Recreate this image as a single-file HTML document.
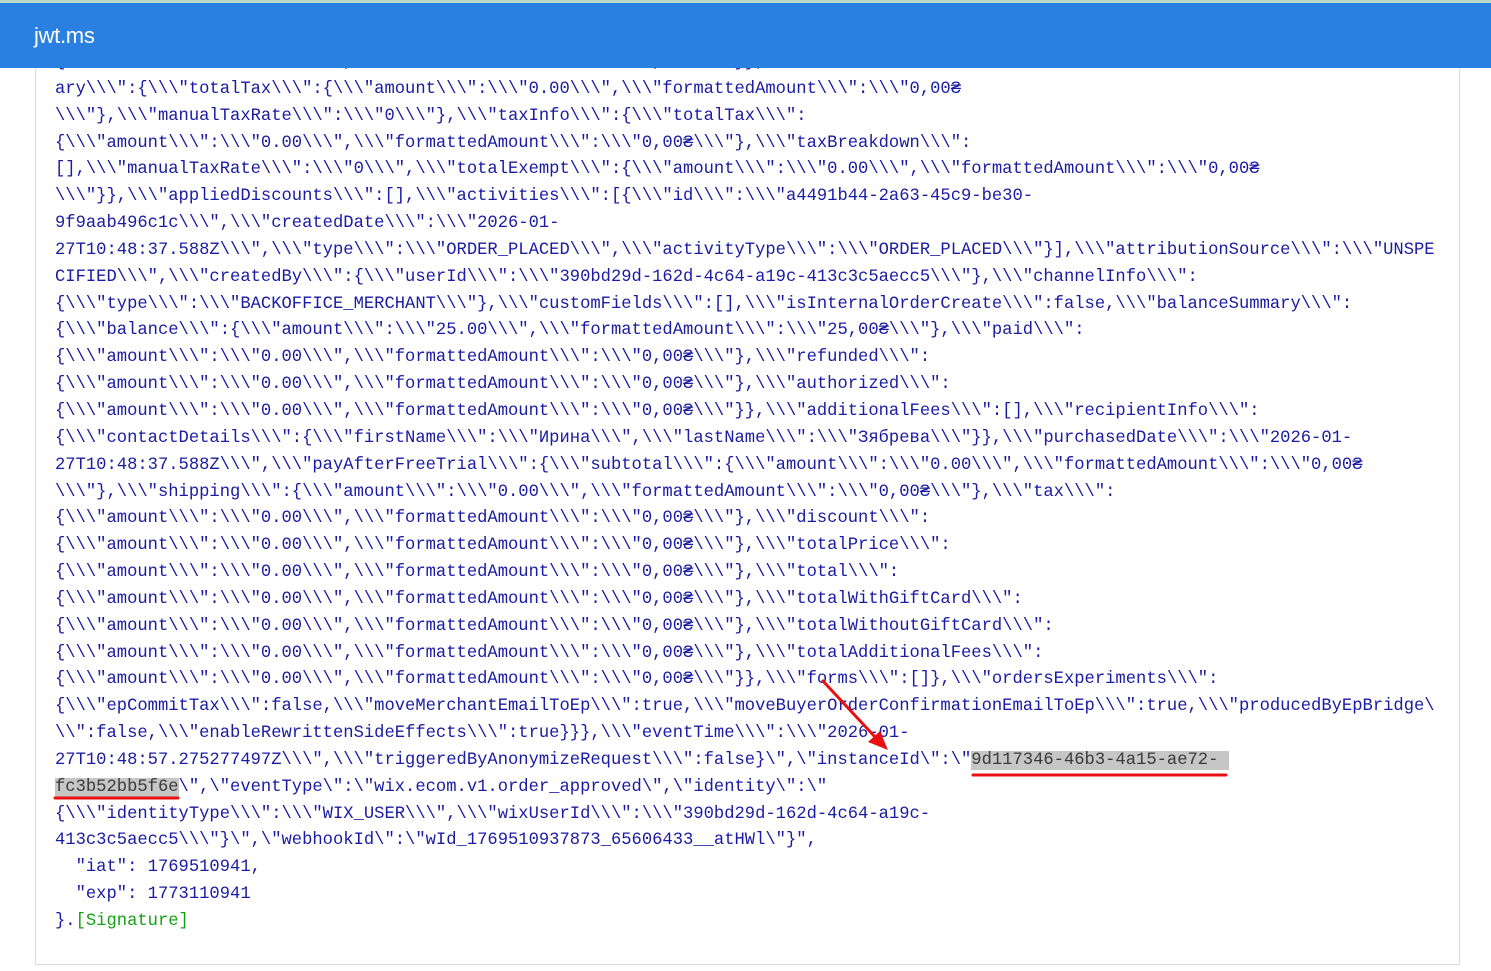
<!DOCTYPE html>
<html><head><meta charset="utf-8"><style>
html,body{margin:0;padding:0;width:1491px;height:971px;overflow:hidden;background:#fff;}
.top{position:absolute;left:0;top:0;width:1491px;height:3px;background:#b9d9c9;}
.hdr{position:absolute;left:0;top:3px;width:1491px;height:65px;background:#2a80e1;z-index:5;}
.hdr span{position:absolute;left:34px;top:20px;color:#fff;font:22px "Liberation Sans",sans-serif;letter-spacing:-0.3px;}
.card{position:absolute;left:35px;top:40px;width:1423px;height:924px;border:1px solid #dcdcdc;border-top:none;}
.code{position:absolute;left:55px;top:50px;font-family:"Liberation Mono","DejaVu Sans Mono",monospace;font-size:17.17px;color:#1b1ba3;}
.code div{height:26.85px;line-height:26.85px;white-space:pre;}
.hl{background:#c6c6c6;color:#3a3a3a;}
.g{color:#16a016;}
</style></head><body>
<div class="top"></div>
<div class="hdr"><span>jwt.ms</span></div>
<div class="card"></div>
<div class="code"><div>{\\\"amount\\\":\\\"0.00\\\",\\\"formattedAmount\\\":\\\"0,00₴\\\"}},\\\"taxSumm</div><div>ary\\\":{\\\"totalTax\\\":{\\\"amount\\\":\\\"0.00\\\",\\\"formattedAmount\\\":\\\"0,00₴</div><div>\\\"},\\\"manualTaxRate\\\":\\\"0\\\"},\\\"taxInfo\\\":{\\\"totalTax\\\":</div><div>{\\\"amount\\\":\\\"0.00\\\",\\\"formattedAmount\\\":\\\"0,00₴\\\"},\\\"taxBreakdown\\\":</div><div>[],\\\"manualTaxRate\\\":\\\"0\\\",\\\"totalExempt\\\":{\\\"amount\\\":\\\"0.00\\\",\\\"formattedAmount\\\":\\\"0,00₴</div><div>\\\"}},\\\"appliedDiscounts\\\":[],\\\"activities\\\":[{\\\"id\\\":\\\"a4491b44-2a63-45c9-be30-</div><div>9f9aab496c1c\\\",\\\"createdDate\\\":\\\"2026-01-</div><div>27T10:48:37.588Z\\\",\\\"type\\\":\\\"ORDER_PLACED\\\",\\\"activityType\\\":\\\"ORDER_PLACED\\\"}],\\\"attributionSource\\\":\\\"UNSPE</div><div>CIFIED\\\",\\\"createdBy\\\":{\\\"userId\\\":\\\"390bd29d-162d-4c64-a19c-413c3c5aecc5\\\"},\\\"channelInfo\\\":</div><div>{\\\"type\\\":\\\"BACKOFFICE_MERCHANT\\\"},\\\"customFields\\\":[],\\\"isInternalOrderCreate\\\":false,\\\"balanceSummary\\\":</div><div>{\\\"balance\\\":{\\\"amount\\\":\\\"25.00\\\",\\\"formattedAmount\\\":\\\"25,00₴\\\"},\\\"paid\\\":</div><div>{\\\"amount\\\":\\\"0.00\\\",\\\"formattedAmount\\\":\\\"0,00₴\\\"},\\\"refunded\\\":</div><div>{\\\"amount\\\":\\\"0.00\\\",\\\"formattedAmount\\\":\\\"0,00₴\\\"},\\\"authorized\\\":</div><div>{\\\"amount\\\":\\\"0.00\\\",\\\"formattedAmount\\\":\\\"0,00₴\\\"}},\\\"additionalFees\\\":[],\\\"recipientInfo\\\":</div><div>{\\\"contactDetails\\\":{\\\"firstName\\\":\\\"Ирина\\\",\\\"lastName\\\":\\\"Зябрева\\\"}},\\\"purchasedDate\\\":\\\"2026-01-</div><div>27T10:48:37.588Z\\\",\\\"payAfterFreeTrial\\\":{\\\"subtotal\\\":{\\\"amount\\\":\\\"0.00\\\",\\\"formattedAmount\\\":\\\"0,00₴</div><div>\\\"},\\\"shipping\\\":{\\\"amount\\\":\\\"0.00\\\",\\\"formattedAmount\\\":\\\"0,00₴\\\"},\\\"tax\\\":</div><div>{\\\"amount\\\":\\\"0.00\\\",\\\"formattedAmount\\\":\\\"0,00₴\\\"},\\\"discount\\\":</div><div>{\\\"amount\\\":\\\"0.00\\\",\\\"formattedAmount\\\":\\\"0,00₴\\\"},\\\"totalPrice\\\":</div><div>{\\\"amount\\\":\\\"0.00\\\",\\\"formattedAmount\\\":\\\"0,00₴\\\"},\\\"total\\\":</div><div>{\\\"amount\\\":\\\"0.00\\\",\\\"formattedAmount\\\":\\\"0,00₴\\\"},\\\"totalWithGiftCard\\\":</div><div>{\\\"amount\\\":\\\"0.00\\\",\\\"formattedAmount\\\":\\\"0,00₴\\\"},\\\"totalWithoutGiftCard\\\":</div><div>{\\\"amount\\\":\\\"0.00\\\",\\\"formattedAmount\\\":\\\"0,00₴\\\"},\\\"totalAdditionalFees\\\":</div><div>{\\\"amount\\\":\\\"0.00\\\",\\\"formattedAmount\\\":\\\"0,00₴\\\"}},\\\"forms\\\":[]},\\\"ordersExperiments\\\":</div><div>{\\\"epCommitTax\\\":false,\\\"moveMerchantEmailToEp\\\":true,\\\"moveBuyerOrderConfirmationEmailToEp\\\":true,\\\"producedByEpBridge\</div><div>\\":false,\\\"enableRewrittenSideEffects\\\":true}}},\\\"eventTime\\\":\\\"2026-01-</div><div>27T10:48:57.275277497Z\\\",\\\"triggeredByAnonymizeRequest\\\":false}\",\"instanceId\":\"<span class="hl">9d117346-46b3-4a15-ae72- </span></div><div><span class="hl">fc3b52bb5f6e</span>\",\"eventType\":\"wix.ecom.v1.order_approved\",\"identity\":\"</div><div>{\\\"identityType\\\":\\\"WIX_USER\\\",\\\"wixUserId\\\":\\\"390bd29d-162d-4c64-a19c-</div><div>413c3c5aecc5\\\"}\",\"webhookId\":\"wId_1769510937873_65606433__atHWl\"}",</div><div>  "iat": 1769510941,</div><div>  "exp": 1773110941</div><div>}.<span class="g">[Signature]</span></div></div>
<svg style="position:absolute;left:0;top:0;z-index:3" width="1491" height="971">
<line x1="973" y1="775" x2="1226" y2="775" stroke="#e81010" stroke-width="3" stroke-linecap="round"/>
<line x1="55" y1="798" x2="178" y2="798" stroke="#e81010" stroke-width="3" stroke-linecap="round"/>
<line x1="822" y1="680" x2="876" y2="738" stroke="#e81010" stroke-width="3"/>
<polygon points="888,750 868,742 880,731" fill="#e81010"/>
</svg>
</body></html>
